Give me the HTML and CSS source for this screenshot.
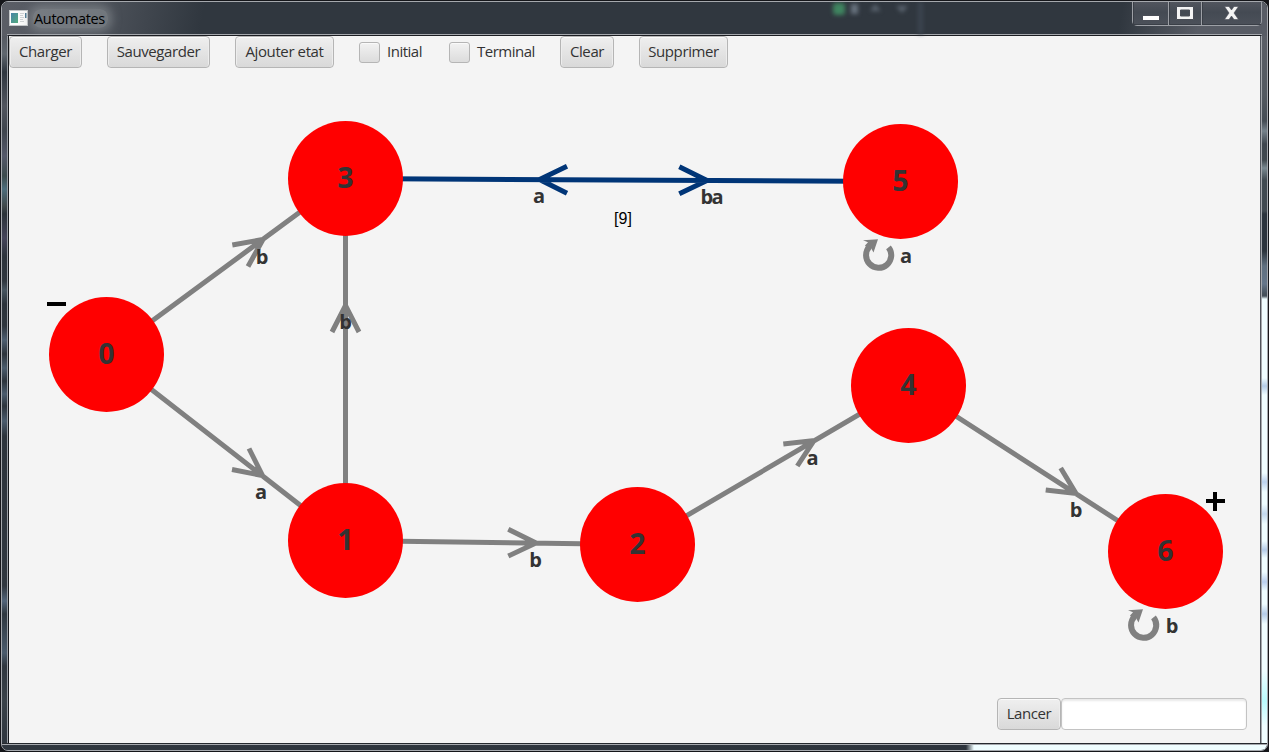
FILE: index.html
```html
<!DOCTYPE html>
<html lang="fr">
<head>
<meta charset="utf-8">
<title>Automates</title>
<link rel="stylesheet" href="styles.css">
</head>
<body>
<div class="window">
  <header class="titlebar">
    <svg class="app-icon" width="19" height="16" viewBox="0 0 19 16">
      <defs><linearGradient id="pic" x2="1" y2="1"><stop stop-color="#4784a8"/><stop offset="1" stop-color="#53aa7d"/></linearGradient></defs>
      <rect x="0.5" y="0.5" width="18" height="15" fill="#fbfbfb" stroke="#c3c6c8"/>
      <rect x="2" y="3" width="7" height="10" fill="url(#pic)"/>
      <path d="M11 3.500h4M11 5.500h3M11 7.500h4M11 9.500h3M11 11.500h4" stroke="#d0d3d5"/>
      <rect x="16" y="3" width="1.500" height="5" fill="#4b7a94"/>
    </svg>
    <h1 class="title">Automates</h1>
    <svg class="backdrop" width="110" height="32" viewBox="0 0 110 32">
      <rect x="13" y="1" width="12" height="12" rx="3" fill="#3f8560"/>
      <rect x="31" y="2" width="7" height="10" fill="#68737f"/>
      <path d="M50 9l5-7 6 7zM76 4l6 7 6-7z" fill="#5b6570"/>
      <rect x="98" y="0" width="5" height="34" fill="#3c4550"/>
    </svg>
    <div class="controls">
      <span class="control control-min"><svg width="18" height="6" viewBox="0 0 18 6"><rect x=".5" y=".5" width="17" height="5" fill="#fff" stroke="#4a4e57"/></svg></span>
      <span class="control control-max"><svg width="18" height="14" viewBox="0 0 18 14"><path fill-rule="evenodd" d="M.5.5h17v13H.5zM4.500 4v6h9V4z" fill="#f4f4f4" stroke="#4a4e57"/></svg></span>
      <span class="control control-close"><svg width="15" height="14" viewBox="0 0 15 14"><path d="M.5.500h4.500l2.500 3.500L10 .5h4.500L10 7l4.500 6.500H10L7.500 10 5 13.500H.5L5 7z" fill="#f4f4f4" stroke="#4a4e57" stroke-width=".6"/></svg></span>
    </div>
  </header>
  <div class="middle">
    <div class="edge edge-left"></div>
    <main class="content">
      <div class="toolbar">
        <button class="btn btn-load">Charger</button>
        <button class="btn btn-save">Sauvegarder</button>
        <button class="btn btn-add">Ajouter etat</button>
        <label class="check check-initial"><span class="box"></span>Initial</label>
        <label class="check check-terminal"><span class="box"></span>Terminal</label>
        <button class="btn btn-clear">Clear</button>
        <button class="btn btn-delete">Supprimer</button>
      </div>
      <svg class="graph" width="1251" height="630" viewBox="9 68 1251 630">
        <defs>
          <g id="loop">
            <path d="M-9-8.500A12.600 12.600 0 1 0 10-7.700" fill="none" stroke="#808080" stroke-width="6"/>
            <path d="M-15.500-14.800L-.5-15.800-5-2.500-7.500-7-10-5-13.500-9.500-10.500-12.800z" fill="#808080"/>
          </g>
        </defs>
        <g class="edges">
          <path d="M106.500 354.500L345.500 178.500M232.300 245L263 239.500 248 266.500"/>
          <path d="M106.500 354.500L345.500 540.500M232 469.500L262.500 475.500 249 448.500"/>
          <path d="M345.500 540.500V178.500M332 332L345.500 305.500 359 332"/>
          <path d="M345.500 540.500L637.500 544.500M508.300 529.300L536 543 508.300 556"/>
          <path d="M637.500 544.500L908.500 385.500M783.300 444L814 440.500 797.300 466"/>
          <path d="M908.500 385.500L1165.500 551.500M1045.700 490L1076 493.500 1060.700 468"/>
          <path class="selected" d="M345.500 178.500L900.500 181.500M567 166.300L539.500 179.500 567 193.300M679.300 166.800L707 180.500 679.300 193.800"/>
        </g>
        <g class="nodes">
          <circle cx="106.500" cy="354.500" r="57.500"/>
          <circle cx="345.500" cy="540.500" r="57.500"/>
          <circle cx="637.500" cy="544.500" r="57.500"/>
          <circle cx="345.500" cy="178.500" r="57.500"/>
          <circle cx="908.500" cy="385.500" r="57.500"/>
          <circle cx="900.500" cy="181.500" r="57.500"/>
          <circle cx="1165.500" cy="551.500" r="57.500"/>
        </g>
        <g class="node-names">
          <text x="106.500" y="364">0</text>
          <text x="345.500" y="550">1</text>
          <text x="637.500" y="554">2</text>
          <text x="345.500" y="188">3</text>
          <text x="908.500" y="395">4</text>
          <text x="900.500" y="191">5</text>
          <text x="1165.500" y="561">6</text>
        </g>
        <g class="labels">
          <text x="262" y="264">b</text>
          <text x="261" y="499">a</text>
          <text x="345.500" y="329">b</text>
          <text x="535.500" y="567">b</text>
          <text x="812.500" y="465">a</text>
          <text x="1076" y="517">b</text>
          <text x="539" y="203">a</text>
          <text x="712" y="204" textLength="23">ba</text>
          <text x="906" y="263">a</text>
          <text x="1172" y="633">b</text>
        </g>
        <text class="weight" x="623" y="224" textLength="18">[9]</text>
        <use href="#loop" x="878.500" y="255"/>
        <use href="#loop" x="1143.500" y="625"/>
        <path class="marks" d="M47 304H66M1206 501H1225M1215 492V511"/>
      </svg>
      <div class="runbar">
        <button class="btn btn-run">Lancer</button>
        <input class="word" type="text" aria-label="Mot">
      </div>
    </main>
    <div class="edge edge-right"></div>
  </div>
  <footer class="bottom-edge"></footer>
</div>
</body>
</html>
```

FILE: styles.css
```css
* { box-sizing: border-box; }

body {
  margin: 0;
  width: 1269px;
  height: 752px;
  overflow: hidden;
  background: #15161a;
  font-family: "Open Sans", "Noto Sans", sans-serif;
  color: #333;
}

.window {
  width: 1267px;
  height: 750px;
  margin: 1px;
  display: flex;
  flex-direction: column;
  border: 1px solid #a5a8ad;
  border-radius: 7px;
  overflow: hidden;
  background: #30373f;
}

.titlebar {
  height: 34px;
  flex: none;
  display: flex;
  align-items: flex-start;
  padding-left: 7px;
  background:
    linear-gradient(#a5a8ad, #a5a8ad) 5px 32px / 1255px 1px no-repeat,
    linear-gradient(#1b1d22, #1b1d22) 6px 33px / 1253px 1px no-repeat,
    linear-gradient(100deg, rgba(88, 92, 101, 0) 15%, #585c65 60%) right / 170px 34px no-repeat,
    linear-gradient(100deg, #5b5e66 0, #50555d 90px, #30373f 200px, #30373f 100%);
}

.app-icon { margin-top: 8px; flex: none; }

.title {
  margin: 7px 0 0 5px;
  padding: 0 1px;
  width: 75px;
  font-size: 14.5px;
  line-height: 19px;
  font-weight: 400;
  letter-spacing: -0.3px;
  color: #000;
  border-radius: 8px;
  background: rgba(150, 155, 160, .5);
  box-shadow: 0 0 10px 4px rgba(150, 155, 160, .5);
}

.backdrop {
  margin-left: 712px;
  flex: none;
  filter: blur(2px);
}

.controls {
  display: flex;
  width: 130px;
  height: 24px;
  margin-left: auto;
  margin-right: 5px;
  border: 1px solid #9da0a6;
  border-top: 0;
  border-radius: 0 0 5px 5px;
  background: linear-gradient(#51555e, #444a53 45%, #4c515a);
}

.control {
  display: flex;
  justify-content: center;
  align-items: center;
  padding-bottom: 1px;
  border-right: 1px solid #9da0a6;
  box-shadow: inset 0 -1px #3a3f47, inset 1px 0 #3a3f47;
}

.control-min { width: 36px; padding-top: 9px; }
.control-max { width: 33px; }
.control-close { flex: 1; border-right: 0; }

.middle {
  flex: 1;
  display: flex;
  min-height: 0;
}

.edge { flex: none; }

.edge-left {
  width: 7px;
  border-right: 1px solid #14161a;
  box-shadow: inset -1px 0 #9b9fa5;
  background: linear-gradient(#565a62 0, #60676f 18px, #2f363f 36px, #51555e 70px, #3f454d 95px, #55596a 120px, #3d4b4d 140px, #4d6d7c 153px, #41494b 170px, #2c3339 178px, #45455a 202px, #2c333b 220px, #30373f 245px, #475560 254px, #2c333b 268px, #2f363e 290px, #4e5f71 304px, #2d343c 318px, #4b5c6d 332px, #2d343c 345px, #4b5c6d 358px, #2d343c 370px, #4b5c6d 385px, #2d343c 400px, #30373f 550px, #53657a 565px, #2f373f 578px, #4b5c6d 617px, #30373f 630px, #3a4249 665px, #30373f 700px);
}

.edge-right {
  width: 7px;
  border-left: 1px solid #50555c;
  box-shadow: inset 1px 0 #a5a8ad;
  background: linear-gradient(#5b5f67 0, #535960 60px, #454c54 85px, #76828b 95px, #3f464e 108px, #41494f 124px, #7a8991 132px, #414a51 144px, #414950 175px, #2c343d 178px, #2c343d 215px, #607080 230px, #65768a 248px, #46515b 258px, #46515b 260px, #effdff 263px, #effdff 342px, #b5cde8 350px, #effdff 359px, #effdff 437px, #bcd2ee 446px, #effdff 456px, #effdff 468px, #c3d8ee 478px, #effdff 488px, #effdff 505px, #b5cce8 514px, #effdff 522px, #effdff 536px, #bacfee 546px, #effdff 555px, #effdff 568px, #b4cbe8 578px, #effdff 588px, #effdff 635px, #b9fbfd 665px, #effdff 690px);
}

.bottom-edge {
  flex: none;
  height: 7px;
  border-top: 1px solid #25292e;
  box-shadow: inset 0 1px #a5a8ad;
  background: linear-gradient(90deg, #30373f 0, #2d343c 964px, #effdff 972px);
}

.content {
  width: 1251px;
  flex: none;
  display: flex;
  flex-direction: column;
  background: #f4f4f4;
}

.toolbar {
  display: flex;
  gap: 25px;
  height: 32px;
  flex: none;
}

.btn {
  height: 32px;
  flex: none;
  padding: 0 0 2px;
  border: 1px solid #b5b5b5;
  border-radius: 4px;
  background: linear-gradient(#efefef, #d9d9d9);
  box-shadow: inset 0 1px #fafafa, inset 1px 0 #ededed, inset -1px 0 #ededed;
  font: 15px/20px "Open Sans", "Noto Sans", sans-serif;
  letter-spacing: -0.4px;
  color: #333;
  white-space: nowrap;
}

.btn-load { width: 73px; }
.btn-save { width: 103px; }
.btn-add { width: 99px; }
.btn-clear { width: 54px; }
.btn-delete { width: 89px; }
.btn-run { width: 64px; }

.check {
  display: flex;
  align-items: center;
  gap: 7px;
  padding-bottom: 2px;
  font-size: 15px;
  line-height: 20px;
  letter-spacing: -0.5px;
  white-space: nowrap;
}

.check-initial { width: 65px; }
.check-terminal { width: 86px; }

.box {
  width: 21px;
  height: 21px;
  margin-top: 3px;
  flex: none;
  border: 1px solid #b5b5b5;
  border-radius: 3px;
  background: linear-gradient(#f2f2f2, #dcdcdc);
  box-shadow: inset 0 1px #fafafa;
}

.graph { display: block; flex: none; }

.edges path {
  fill: none;
  stroke: #808080;
  stroke-width: 5;
}

.edges .selected { stroke: #003577; }

.nodes circle { fill: #f00; }

.node-names text {
  font: 700 28.500px "Open Sans", "Noto Sans", sans-serif;
  fill: #333;
  text-anchor: middle;
}

.labels text {
  font: 700 20px "Open Sans", "Noto Sans", sans-serif;
  fill: #333;
  text-anchor: middle;
}

.weight {
  font: 16px "Liberation Sans", Arial, sans-serif;
  fill: #000;
  text-anchor: middle;
}

.marks {
  fill: none;
  stroke: #000;
  stroke-width: 4;
}

.runbar {
  display: flex;
  justify-content: flex-end;
  padding-right: 13px;
  height: 45px;
}

.word {
  width: 186px;
  height: 32px;
  padding: 0 8px;
  border: 1px solid #c3c3c3;
  border-radius: 4px;
  background: #fff;
  box-shadow: inset 0 2px 2px #e9e9e9;
  font: 15px "Open Sans", "Noto Sans", sans-serif;
}
```
